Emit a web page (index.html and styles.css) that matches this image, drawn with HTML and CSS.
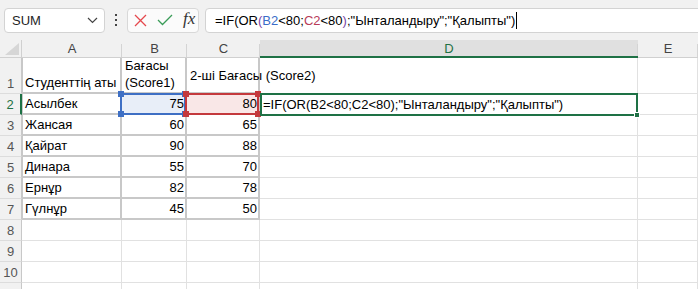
FILE: index.html
```html
<!DOCTYPE html>
<html lang="kk">
<head>
  <meta charset="UTF-8">
  <title>Book1 - Excel</title>
  <link rel="stylesheet" href="styles.css">
</head>
<body>
  <div class="toolbar">
    <div class="name-box">
      <span>SUM</span>
      <svg class="chevron" width="11" height="7" viewBox="0 0 11 7"><path d="M1 1 L5.5 5.5 L10 1" fill="none" stroke="#444" stroke-width="1.2"/></svg>
    </div>
    <div class="dots"><i></i><i></i><i></i></div>
    <div class="fx-box">
      <svg width="13" height="13" viewBox="0 0 13 13"><path d="M1 1 L12 12 M12 1 L1 12" stroke="#e5484d" stroke-width="1.3" fill="none"/></svg>
      <svg width="16" height="12" viewBox="0 0 16 12"><path d="M1 6 L5.5 10.5 L15 1" stroke="#3a9c58" stroke-width="1.3" fill="none"/></svg>
      <span class="fx">fx</span>
    </div>
    <div class="formula-box">
      <span>=IF(OR<span class="paren">(</span><span class="ref-b">B2</span>&lt;80;<span class="ref-c">C2</span>&lt;80<span class="paren">)</span>;"Ынталандыру";"Қалыпты")</span><span class="caret"></span>
    </div>
  </div>

  <div class="sheet">
    <!-- column headers -->
    <div class="corner"><svg width="16" height="13" viewBox="0 0 16 13"><polygon points="15,0 15,12 1,12" fill="#d6d6d6"/></svg></div>
    <div class="col-head">A</div>
    <div class="col-head">B</div>
    <div class="col-head">C</div>
    <div class="col-head active">D</div>
    <div class="col-head">E</div>

    <!-- row 1 -->
    <div class="row-head tall">1</div>
    <div class="cell bx first">Студенттің аты</div>
    <div class="cell bx wrap">Бағасы<br>(Score1)</div>
    <div class="cell bx middle">2-ші Бағасы (Score2)</div>
    <div class="cell"></div>
    <div class="cell"></div>

    <!-- row 2 -->
    <div class="row-head current">2</div>
    <div class="cell bx first">Асылбек</div>
    <div class="cell bx num">
      <div class="ref-box blue"><b class="h tl"></b><b class="h tr"></b><b class="h bl"></b><b class="h br"></b></div>
      <span class="val">75</span>
    </div>
    <div class="cell bx num">
      <div class="ref-box red"><b class="h tl"></b><b class="h tr"></b><b class="h bl"></b><b class="h br"></b></div>
      <span class="val">80</span>
    </div>
    <div class="cell">
      <div class="edit-box"><b class="fill-handle"></b></div>
      <span class="val">=IF(OR(B2&lt;80;C2&lt;80);"Ынталандыру";"Қалыпты")</span>
    </div>
    <div class="cell"></div>

    <!-- rows 3-7 -->
    <div class="row-head">3</div>
    <div class="cell bx first">Жансая</div>
    <div class="cell bx num">60</div>
    <div class="cell bx num">65</div>
    <div class="cell"></div>
    <div class="cell"></div>

    <div class="row-head">4</div>
    <div class="cell bx first">Қайрат</div>
    <div class="cell bx num">90</div>
    <div class="cell bx num">88</div>
    <div class="cell"></div>
    <div class="cell"></div>

    <div class="row-head">5</div>
    <div class="cell bx first">Динара</div>
    <div class="cell bx num">55</div>
    <div class="cell bx num">70</div>
    <div class="cell"></div>
    <div class="cell"></div>

    <div class="row-head">6</div>
    <div class="cell bx first">Ернұр</div>
    <div class="cell bx num">82</div>
    <div class="cell bx num">78</div>
    <div class="cell"></div>
    <div class="cell"></div>

    <div class="row-head">7</div>
    <div class="cell bx first">Гүлнұр</div>
    <div class="cell bx num">45</div>
    <div class="cell bx num">50</div>
    <div class="cell"></div>
    <div class="cell"></div>

    <!-- empty rows -->
    <div class="row-head">8</div>
    <div class="cell"></div><div class="cell"></div><div class="cell"></div><div class="cell"></div><div class="cell"></div>
    <div class="row-head">9</div>
    <div class="cell"></div><div class="cell"></div><div class="cell"></div><div class="cell"></div><div class="cell"></div>
    <div class="row-head">10</div>
    <div class="cell"></div><div class="cell"></div><div class="cell"></div><div class="cell"></div><div class="cell"></div>
    <div class="row-head"></div>
    <div class="cell"></div><div class="cell"></div><div class="cell"></div><div class="cell"></div><div class="cell"></div>
  </div>
</body>
</html>
```

FILE: styles.css
```css
* {
  box-sizing: border-box;
}

body {
  margin: 0;
  font-family: 'Liberation Sans', Arial, sans-serif;
  font-size: 13px;
  color: #000;
  background-color: #fff;
  overflow: hidden;
  width: 698px;
  height: 289px;
}

/* formula bar */
.toolbar {
  display: flex;
  align-items: center;
  height: 40px;
  padding-left: 4px;
  background-color: #f1f1f1;
}

.name-box {
  display: flex;
  align-items: center;
  justify-content: space-between;
  width: 101px;
  height: 25px;
  padding: 0 6px 0 7px;
  background-color: #fff;
  border: 1px solid #d3d3d3;
  border-radius: 4px;
  color: #1f1f1f;
}

.dots {
  display: flex;
  flex-direction: column;
  gap: 3px;
  width: 22px;
  align-items: center;
}

.dots i {
  width: 2px;
  height: 2px;
  background-color: #444;
}

.fx-box {
  display: flex;
  align-items: center;
  gap: 10px;
  width: 72px;
  height: 25px;
  padding-left: 6px;
  background-color: #fbfbfb;
  border: 1px solid #d8d8d8;
  border-radius: 4px;
}

.fx {
  font-family: 'Liberation Serif', 'DejaVu Serif', serif;
  font-style: italic;
  font-size: 17px;
  color: #333;
  margin-top: -2px;
}

.formula-box {
  display: flex;
  align-items: center;
  flex: 1;
  height: 25px;
  margin-left: 6px;
  margin-right: -8px;
  padding-left: 9px;
  background-color: #fff;
  border: 1px solid #d3d3d3;
  border-radius: 4px;
  white-space: nowrap;
}

.ref-b {
  color: #3a6cc8;
}

.ref-c {
  color: #b83a58;
}

.paren {
  color: #7a46a6;
}

.caret {
  display: inline-block;
  width: 1px;
  height: 17px;
  margin-left: 1px;
  background-color: #000;
}

/* grid */
.sheet {
  display: grid;
  grid-template-columns: 22px 100px 65px 73px 378px 60px;
  grid-template-rows: 18px 36px repeat(10, 21px);
}

.corner {
  display: flex;
  align-items: flex-end;
  justify-content: flex-end;
  padding: 0 1px 1px 0;
  background-color: #f1f1f1;
  border-right: 1px solid #d0d0d0;
  border-bottom: 1px solid #d0d0d0;
}

.col-head {
  position: relative;
  display: flex;
  align-items: center;
  justify-content: center;
  background-color: #f1f1f1;
  border-bottom: 1px solid #d0d0d0;
  color: #444;
  font-size: 13px;
}

.col-head::after {
  content: "";
  position: absolute;
  right: 0;
  top: 4px;
  bottom: 0;
  width: 1px;
  background-color: #d4d4d4;
}

.col-head.active {
  background-color: #e0e0e0;
  color: #1e7145;
  border-bottom: 2px solid #1e7145;
}

.row-head {
  display: flex;
  align-items: flex-end;
  justify-content: center;
  padding-bottom: 2px;
  background-color: #f1f1f1;
  border-right: 1px solid #c8c8c8;
  border-bottom: 1px solid #dcdcdc;
  color: #555;
  font-size: 13px;
}

.row-head.current {
  color: #1e7145;
  border-right: 2px solid #1e7145;
}

.cell {
  position: relative;
  display: flex;
  align-items: flex-end;
  padding: 0 3px 2px 3px;
  border-right: 1px solid #e1e1e1;
  border-bottom: 1px solid #e1e1e1;
  white-space: nowrap;
}

.cell.bx {
  border-right: 2px solid #c8c8c8;
  border-bottom: 2px solid #c8c8c8;
}

.cell.first {
  border-left: 1px solid #c8c8c8;
  padding-left: 2px;
}

.cell.num {
  justify-content: flex-end;
  padding-right: 1px;
}

.cell.wrap {
  white-space: normal;
  line-height: 17px;
  padding-bottom: 1px;
}

.cell.middle {
  align-items: center;
  padding-bottom: 0;
}

.val {
  position: relative;
  z-index: 1;
}

/* reference highlight boxes */
.ref-box {
  position: absolute;
  top: -1px;
  left: -2px;
  right: -1px;
  bottom: -2px;
  border: 2px solid;
}

.ref-box.blue {
  border-color: #3e6fc4;
  background-color: #e8eef8;
}

.ref-box.red {
  border-color: #c4393d;
  background-color: #f9e7e7;
}

.h {
  position: absolute;
  width: 6px;
  height: 6px;
  z-index: 2;
}

.blue .h {
  background-color: #3e6fc4;
}

.red .h {
  background-color: #c4393d;
}

.h.tl { top: -4px; left: -4px; }
.h.tr { top: -4px; right: -4px; }
.h.bl { bottom: -4px; left: -4px; }
.h.br { bottom: -4px; right: -4px; }

.edit-box {
  position: absolute;
  top: -1px;
  left: 0;
  right: -1px;
  bottom: -2px;
  border: 2px solid #1e7145;
  z-index: 2;
}

.fill-handle {
  position: absolute;
  right: -4px;
  bottom: -4px;
  width: 6px;
  height: 6px;
  background-color: #1e7145;
  border: 1px solid #fff;
}
```
